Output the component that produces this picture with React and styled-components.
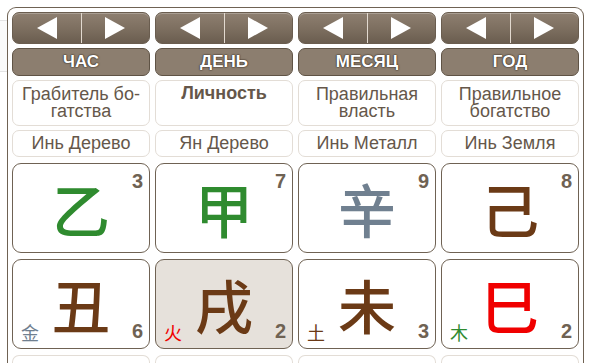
import React from "react";
import styled, { createGlobalStyle } from "styled-components";

const GlobalStyle = createGlobalStyle`
    html, body {
        margin: 0;
        padding: 0;
        background: #ffffff;
        font-family: "Liberation Sans", Arial, sans-serif;
        overflow: hidden;
    }
`;

const COLORS = {
    wood: "#2f8b2f",
    fire: "#f00000",
    earth: "#6b3a16",
    metal: "#708090",
};

const pillars = [
    {
        title: "ЧАС",
        role: "Грабитель бо-\nгатства",
        element: "Инь Дерево",
        stem: { ch: "乙", color: COLORS.wood, num: 3 },
        branch: { ch: "丑", color: COLORS.earth, num: 6, small: "金", smallColor: COLORS.metal },
    },
    {
        title: "ДЕНЬ",
        role: "Личность",
        bold: true,
        element: "Ян Дерево",
        stem: { ch: "甲", color: COLORS.wood, num: 7 },
        branch: { ch: "戌", color: COLORS.earth, num: 2, small: "火", smallColor: COLORS.fire, active: true },
    },
    {
        title: "МЕСЯЦ",
        role: "Правильная\nвласть",
        element: "Инь Металл",
        stem: { ch: "辛", color: COLORS.metal, num: 9 },
        branch: { ch: "未", color: COLORS.earth, num: 3, small: "土", smallColor: COLORS.earth },
    },
    {
        title: "ГОД",
        role: "Правильное\nбогатство",
        element: "Инь Земля",
        stem: { ch: "己", color: COLORS.earth, num: 8 },
        branch: { ch: "巳", color: COLORS.fire, num: 2, small: "木", smallColor: COLORS.wood },
    },
];

const Arrow = ({ dir }) => (
    <svg width="20" height="22" viewBox="0 0 20 22">
        {dir === "left" ? (
            <polygon points="0,11 20,0 20,22" fill="#ffffff" />
        ) : (
            <polygon points="20,11 0,0 0,22" fill="#ffffff" />
        )}
    </svg>
);

const App = () => {
    return (
        <Page>
            <GlobalStyle />
            <SidePanel />
            <Board>
                <Grid>
                    {pillars.map((p) => (
                        <NavButton key={p.title + "nav"}>
                            <NavHalf>
                                <Arrow dir="left" />
                            </NavHalf>
                            <NavHalf $divider>
                                <Arrow dir="right" />
                            </NavHalf>
                        </NavButton>
                    ))}
                    {pillars.map((p) => (
                        <TitleBar key={p.title + "title"}>{p.title}</TitleBar>
                    ))}
                    {pillars.map((p) => (
                        <RoleBox key={p.title + "role"} $bold={p.bold}>
                            {p.role}
                        </RoleBox>
                    ))}
                    {pillars.map((p) => (
                        <ElementBox key={p.title + "el"}>{p.element}</ElementBox>
                    ))}
                    {pillars.map((p) => (
                        <Card key={p.title + "stem"}>
                            <BigChar $color={p.stem.color}>{p.stem.ch}</BigChar>
                            <Num $top>{p.stem.num}</Num>
                        </Card>
                    ))}
                    {pillars.map((p) => (
                        <Card key={p.title + "branch"} $active={p.branch.active}>
                            <BigChar $color={p.branch.color}>{p.branch.ch}</BigChar>
                            <SmallChar $color={p.branch.smallColor}>{p.branch.small}</SmallChar>
                            <Num>{p.branch.num}</Num>
                        </Card>
                    ))}
                    {pillars.map((p) => (
                        <NextRow key={p.title + "next"} />
                    ))}
                </Grid>
            </Board>
        </Page>
    );
};

export default App;

const Page = styled.div`
    position: relative;
    width: 593px;
    height: 363px;
    padding: 7px 0 0 7px;
    box-sizing: border-box;
    overflow: hidden;
`;

const SidePanel = styled.div`
    position: absolute;
    left: 0;
    top: 20px;
    width: 7px;
    height: 50px;
    border-top: 1px solid #e4e4e4;
    border-bottom: 1px solid #e4e4e4;
    background: #fafafa;
`;

const Board = styled.div`
    width: 577px;
    height: 380px;
    border: 1px solid #6f6253;
    border-bottom: none;
    border-radius: 9px 9px 0 0;
    padding: 4px 4px 0 4px;
    box-sizing: border-box;
    background: #ffffff;
`;

const Grid = styled.div`
    display: grid;
    grid-template-columns: repeat(4, 1fr);
    grid-template-rows: 32px 28px 46px 27px 92px 92px 20px;
    column-gap: 5px;
    row-gap: 4px;
    & > :nth-child(n + 17) {
        margin-top: 2px;
    }
    & > :nth-child(n + 21) {
        margin-top: 2px;
    }
`;

const NavButton = styled.div`
    display: flex;
    border: 1px solid #6a5d4f;
    border-radius: 7px;
    background: linear-gradient(to bottom, #8e7f70 0%, #7c6e5f 55%, #6a5d4f 100%);
    box-shadow: inset 0 1px 0 rgba(255, 255, 255, 0.25);
    overflow: hidden;
`;

const NavHalf = styled.div`
    flex: 1;
    display: flex;
    align-items: center;
    justify-content: center;
    border-left: ${(p) => (p.$divider ? "1px solid #e2d9cf" : "none")};
`;

const TitleBar = styled.div`
    display: flex;
    align-items: center;
    justify-content: center;
    background: #8c7e6f;
    border: 1px solid #5f5345;
    border-radius: 7px;
    color: #ffffff;
    font-size: 17px;
    font-weight: bold;
    text-shadow: 0 0 2px #3d3228, 0 0 1px #3d3228, 0 0 1px #3d3228;
`;

const RoleBox = styled.div`
    display: flex;
    align-items: ${(p) => (p.$bold ? "flex-start" : "center")};
    justify-content: center;
    padding-top: ${(p) => (p.$bold ? "4px" : "0")};
    border: 1px solid #e3ddd6;
    border-radius: 7px;
    color: #65574a;
    font-size: 18px;
    line-height: 17px;
    font-weight: ${(p) => (p.$bold ? "bold" : "normal")};
    text-align: center;
    white-space: pre-line;
    box-sizing: border-box;
`;

const ElementBox = styled.div`
    display: flex;
    align-items: center;
    justify-content: center;
    border: 1px solid #e3ddd6;
    border-radius: 7px;
    color: #65574a;
    font-size: 18px;
`;

const Card = styled.div`
    position: relative;
    display: flex;
    align-items: center;
    justify-content: center;
    border: 1px solid #6f6253;
    border-radius: 9px;
    background: ${(p) => (p.$active ? "#e6e1db" : "#ffffff")};
    box-sizing: border-box;
`;

const BigChar = styled.div`
    font-family: "Noto Sans CJK SC", "Noto Sans CJK JP", sans-serif;
    font-size: 58px;
    font-weight: 500;
    line-height: 1;
    color: ${(p) => p.$color};
`;

const Num = styled.span`
    position: absolute;
    right: 6px;
    ${(p) => (p.$top ? "top: 6px;" : "bottom: 5px;")}
    font-size: 20px;
    font-weight: bold;
    color: #6f6253;
`;

const SmallChar = styled.span`
    position: absolute;
    left: 8px;
    bottom: 4px;
    font-family: "Noto Sans CJK SC", "Noto Sans CJK JP", sans-serif;
    font-size: 18px;
    line-height: 1.2;
    color: ${(p) => p.$color};
`;

const NextRow = styled.div`
    border: 1px solid #e3ddd6;
    border-bottom: none;
    border-radius: 7px 7px 0 0;
`;
